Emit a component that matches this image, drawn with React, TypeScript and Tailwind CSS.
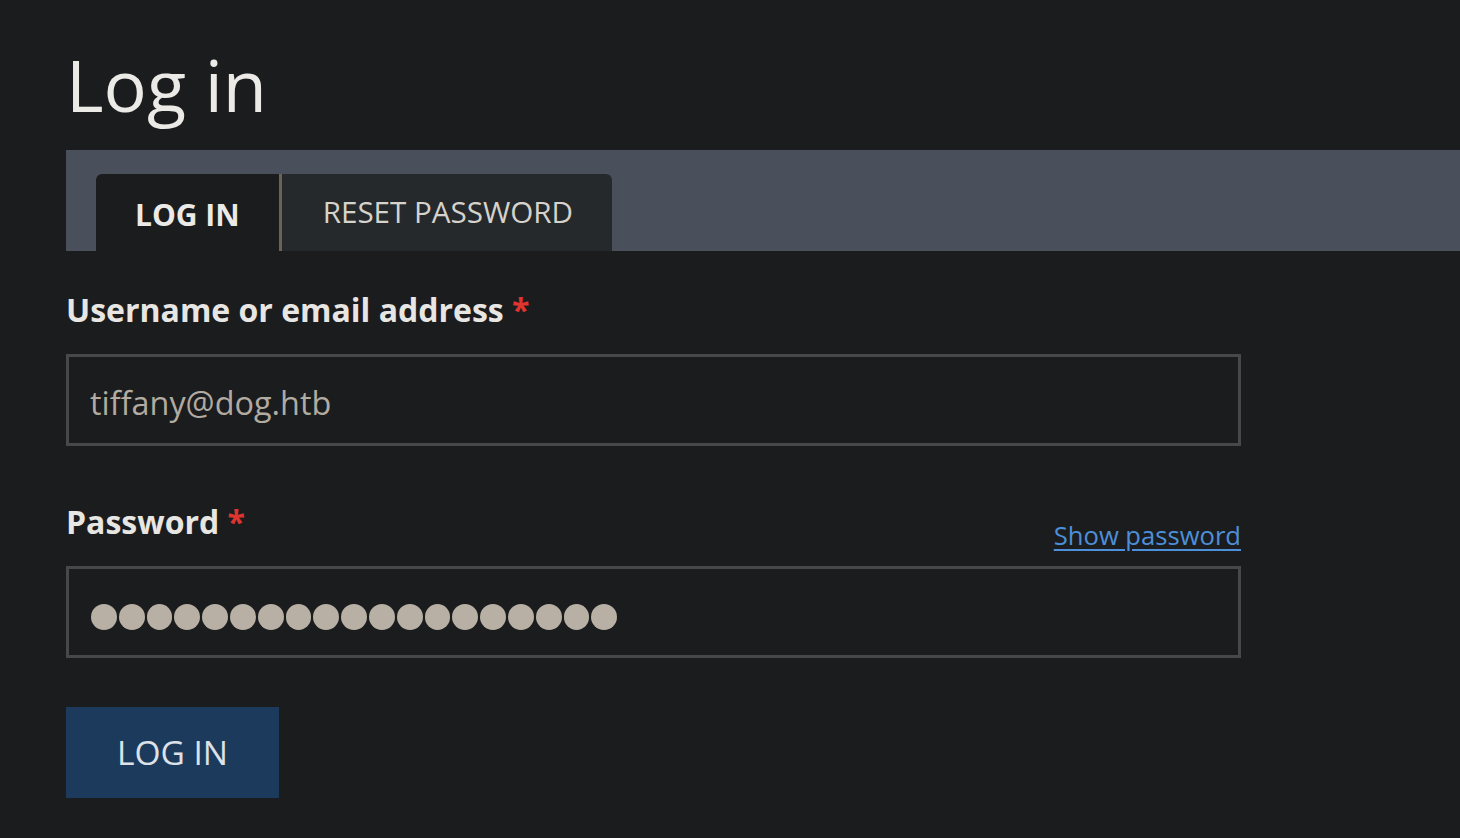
export default function App() {
  const dots = Array.from({ length: 19 })

  return (
    <main
      className="min-h-[838px] w-full overflow-hidden bg-[#1b1c1e] pl-[66px] text-[#e8e6e3]"
      style={{ fontFamily: '"Open Sans", "Liberation Sans", sans-serif' }}
    >
      <h1 className="pt-[48px] mb-[30px] text-[72px] leading-[72px] font-normal text-[#eceae7]">Log in</h1>

      {/* tabs */}
      <div className="flex h-[101px] items-end bg-[#4a505b] pl-[30px]">
        <div className="flex h-[77px]">
          <div className="flex items-center rounded-tl-[6px] bg-[#1b1c1e] px-[39px] pt-[4px] text-[30px] font-bold text-[#eceae7]">
            LOG IN
          </div>
          <div className="w-[3px] bg-[#6e6256]" />
          <div className="flex items-center rounded-tr-[6px] bg-[#26292b] pl-[41px] pr-[39px] text-[29.6px] font-normal text-[#d6d2cc]">
            RESET PASSWORD
          </div>
        </div>
      </div>

      {/* form */}
      <form className="w-[1175px] pt-[39px]" onSubmit={(e) => e.preventDefault()}>
        <label className="block text-[32px] font-bold leading-[40px] text-[#e8e6e3]">
          Username or email address <span className="text-[#e0342f]">*</span>
        </label>
        <div className="mt-[24px] flex h-[92px] items-center border-[3px] border-[#45494b] bg-[#1b1c1e] px-[21px] pt-[3px] text-[32.4px] leading-[40px] text-[#b2aba1]">
          tiffany@dog.htb
        </div>

        <div className="mt-[56px] flex h-[64px] items-start justify-between">
          <label className="block text-[32px] font-bold leading-[40px] text-[#e8e6e3]">
            Password <span className="text-[#e0342f]">*</span>
          </label>
          <a href="#" className="mt-[18px] text-[25.6px] leading-[32px] text-[#4d8fd8] underline underline-offset-[4px]">
            Show password
          </a>
        </div>
        <div className="flex h-[92px] items-center gap-[2px] border-[3px] border-[#45494b] bg-[#1b1c1e] px-[22px] pt-[10px]">
          {dots.map((_, i) => (
            <span key={i} className="block h-[26px] w-[25.8px] rounded-full bg-[#b8b0a4]" />
          ))}
        </div>

        <button
          type="submit"
          className="mt-[49px] flex h-[91px] w-[213px] items-center justify-center bg-[#1c3a5c] text-[33.5px] font-normal text-[#dde2e8]"
        >
          LOG IN
        </button>
      </form>
    </main>
  )
}
